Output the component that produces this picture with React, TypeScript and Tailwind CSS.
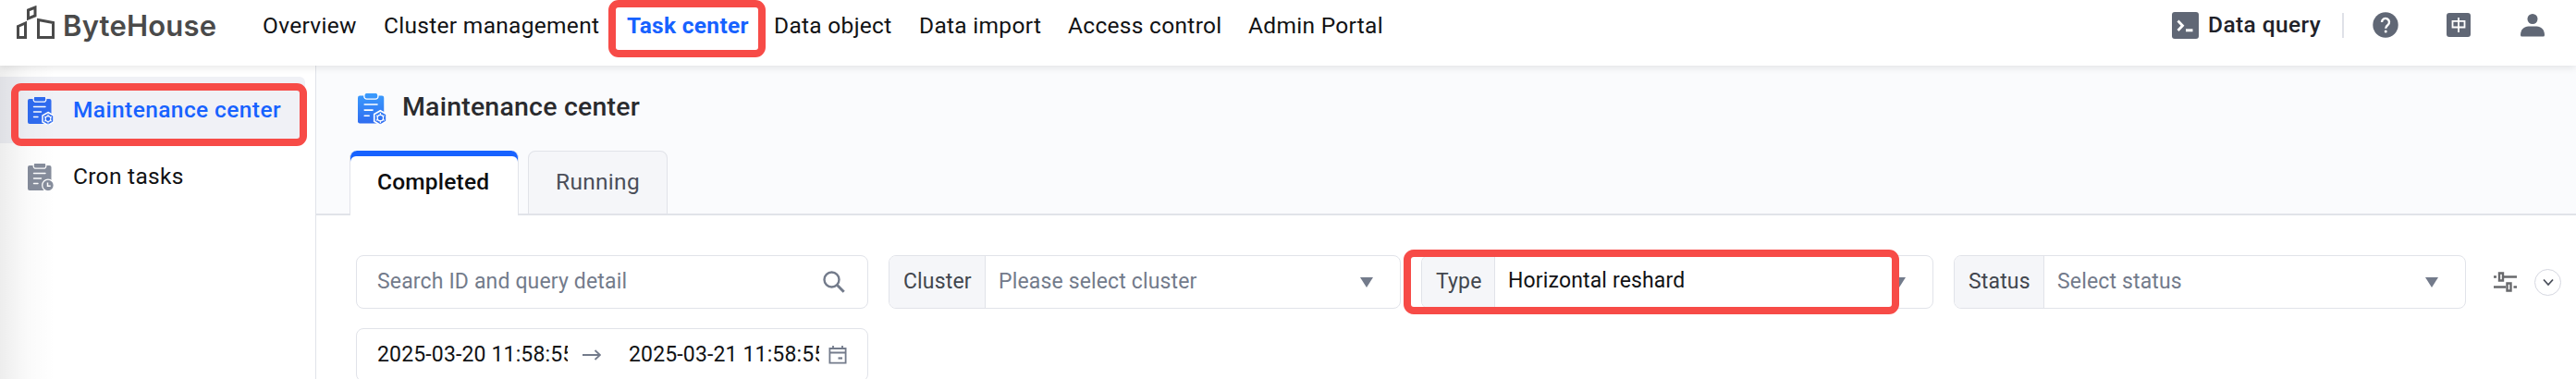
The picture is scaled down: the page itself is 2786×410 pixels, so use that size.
import type { ReactNode } from "react";
import clsx from "clsx";

const navItems = [
  { label: "Overview", width: "w-[131px]" },
  { label: "Cluster management", width: "w-[263px]" },
  { label: "Task center", width: "w-[159px]", active: true },
  { label: "Data object", width: "w-[157px]" },
  { label: "Data import", width: "w-[161px]" },
  { label: "Access control", width: "w-[195px]" },
  { label: "Admin Portal", width: "w-[150px]" },
];

function Logo() {
  return (
    <div className="flex items-start text-[#4a4a4a]">
      <svg className="mt-1.5 h-9 w-[42px]" viewBox="0 0 42 36" fill="none" stroke="currentColor" strokeWidth="3">
        <path d="M1.5 22.5 9.5 19V34.5H1.5z" />
        <path d="M12.5 5 20 2V11L12.5 14z" />
        <path d="M23.5 15.5 39.5 18.5V34.5H23.5z" />
      </svg>
      <span className="ml-2 mt-[9px] text-[31px] leading-[38px] font-semibold tracking-[0.2px] font-['Inter',sans-serif]">ByteHouse</span>
    </div>
  );
}

function ClipboardIcon({ badge, color, className }: { badge: "gear" | "clock"; color: string; className: string }) {
  return (
    <svg className={className} viewBox="0 0 28 30" fill="none">
      <defs>
        <linearGradient id="clip" gradientUnits="userSpaceOnUse" x1="0" y1="0" x2="0" y2="30">
          <stop offset="0" stopColor="#3a9bfd" />
          <stop offset="1" stopColor="#2f6bf0" />
        </linearGradient>
      </defs>
      <rect y="2" width="25.5" height="27" rx="2" fill={color} />
      <rect x="6.2" y="-1" width="13.600" height="6.200" rx="2.500" fill={color} stroke="#fff" strokeWidth="1.200" />
      <path d="M6.500 10.500H19M6.500 16H14.500M6.500 21.500H11" stroke="#fff" strokeWidth="1.400" strokeLinecap="round" />
      {badge === "gear" ? (
        <>
          <path d="M22 16.500 28 20V27L22 30.500 16 27V20z" fill={color} stroke="#fff" strokeWidth="1.500" />
          <circle cx="22" cy="23.600" r="2.900" stroke="#fff" strokeWidth="1.200" />
          <path d="M22 18.500v2M22 26.700v2M18 21.200l1.500.9M24.500 25.200l1.600.9M26 21.200l-1.500.9M19.500 25.200l-1.600.9" stroke="#fff" strokeWidth="1" />
        </>
      ) : (
        <>
          <circle cx="22" cy="23.500" r="6.300" fill={color} stroke="#fff" strokeWidth="1.300" />
          <path d="M21.500 20.500V24.200H24.700" stroke="#fff" strokeWidth="1.500" />
        </>
      )}
    </svg>
  );
}

function QueryIcon() {
  return (
    <svg className="h-[29px] w-[29px]" viewBox="0 0 29 29" fill="none">
      <rect width="29" height="29" rx="3" fill="#606775" />
      <path d="M6.500 9.500 11.500 14.700 6.500 20" stroke="#fff" strokeWidth="2.800" />
      <path d="M15 19.800h7.500" stroke="#fff" strokeWidth="3" />
    </svg>
  );
}

function HelpIcon() {
  return (
    <svg className="h-7 w-7" viewBox="0 0 28 28" fill="none">
      <circle cx="14" cy="14" r="13.700" fill="#606775" />
      <path d="M10 11a4 4 0 1 1 6.300 3.200C14.800 15.300 14.200 15.900 14.200 17.800" stroke="#fff" strokeWidth="2.400" />
      <circle cx="14.200" cy="21" r="1.500" fill="#fff" />
    </svg>
  );
}

function LanguageIcon() {
  return (
    <svg className="h-[26px] w-[26px]" viewBox="0 0 26 26" fill="none">
      <rect width="26" height="26" rx="3" fill="#606775" />
      <path d="M6.500 8.800H19.500V15.500H6.500zM13 5V21" stroke="#fff" strokeWidth="1.800" />
    </svg>
  );
}

function UserIcon() {
  return (
    <svg className="h-[26px] w-[26px]" viewBox="0 0 26 26" fill="#606775">
      <circle cx="13" cy="6.500" r="5.500" />
      <path d="M0 24C0 18 4 14.500 8.500 14.500H17.500C22 14.500 26 18 26 24a1.500 1.500 0 0 1-1.500 1.500h-23A1.500 1.500 0 0 1 0 24z" />
    </svg>
  );
}

function SearchIcon() {
  return (
    <svg className="h-6 w-6" viewBox="0 0 24 24" fill="none" stroke="#737b8b">
      <circle cx="9.500" cy="9.500" r="8" strokeWidth="2.400" />
      <path d="M15.500 15.500 22.700 22.700" strokeWidth="3" />
    </svg>
  );
}

function CalendarIcon() {
  return (
    <svg className="h-5 w-5" viewBox="0 0 20 20" fill="none" stroke="#737b8b" strokeWidth="1.800">
      <path d="M1.400 3H18.600V18.600H1.400zM1.400 7.500H18.600M5 0V3M15 0V3" />
      <path d="M10.500 13.500H15" strokeWidth="2.200" />
    </svg>
  );
}

function SlidersIcon() {
  return (
    <svg className="h-[22px] w-[26px]" viewBox="0 0 26 22" fill="none" stroke="#68696c" strokeWidth="2.400">
      <path d="M1 5.500H4M12 5.500H26M1 16.500H14M22.500 16.500H26" />
      <path d="M7 1.500H11V9.500H7zM15.500 12.500H19.500V20.500H15.500z" />
    </svg>
  );
}

/* red frame drawn over a control */
function Highlight({ className }: { className: string }) {
  return <div className={clsx("pointer-events-none absolute z-20 rounded-[11px] border-8 border-[#f74b47]", className)} />;
}

function Header() {
  return (
    <header className="relative z-10 flex h-[71px] shrink-0 bg-white pl-[18px] shadow-[0_2px_8px_rgba(0,0,0,0.1)]">
      <div className="w-[266px]">
        <Logo />
      </div>
      <nav className="flex pt-3 text-[24.5px] leading-8 tracking-[0.3px] text-[#111214]">
        {navItems.map((item) => (
          <a key={item.label} className={clsx("relative shrink-0 whitespace-nowrap", item.width, item.active && "font-bold text-[#1762ff]")}>
            {item.label}
            {item.active && <Highlight className="-left-5 -top-3 h-[62px] w-[170px]" />}
          </a>
        ))}
      </nav>
      <div className="ml-auto flex h-[54px] items-center pr-[34px]">
        <QueryIcon />
        <span className="ml-2.5 w-[122px] text-[24.5px] font-medium tracking-[0.4px] whitespace-nowrap text-[#1f2229]">Data query</span>
        <span className="mr-[31px] ml-[23px] h-[27px] w-0.5 bg-[#dfe1e8]" />
        <HelpIcon />
        <span className="ml-[52px]"><LanguageIcon /></span>
        <span className="ml-[54px]"><UserIcon /></span>
      </div>
    </header>
  );
}

function Sidebar() {
  return (
    <aside className="w-[342px] shrink-0 border-r border-[#e1e3e9] bg-white pt-3 text-[24.5px] tracking-[0.3px] text-[#111214]">
      <div className="relative flex h-[72px] w-[330px] items-start rounded-r-md bg-[#f0f1f6] pl-[30px] font-medium text-[#1762ff]">
        <ClipboardIcon badge="gear" color="#2f6bf0" className="mt-[22px] h-[30px] w-7" />
        <span className="mt-5 ml-[21px] leading-8 tracking-[0.4px]">Maintenance center</span>
        <Highlight className="top-[7px] left-3 h-[68px] w-[320px]" />
      </div>
      <div className="flex h-[72px] items-start pl-[30px]">
        <ClipboardIcon badge="clock" color="#868d9c" className="mt-[22px] h-[30px] w-7" />
        <span className="mt-5 ml-[21px] leading-8">Cron tasks</span>
      </div>
    </aside>
  );
}

function SelectField({ label, labelWidth, children, filled }: { label: string; labelWidth: string; children: ReactNode; filled?: boolean }) {
  return (
    <div className="flex h-[58px] w-[554px] shrink-0 items-center overflow-hidden rounded-lg border border-[#e1e3e9] bg-white">
      <span className={clsx("flex h-full shrink-0 items-center border-r border-[#e1e3e9] bg-[#f5f6f9] pl-[15px] text-[#42464e]", labelWidth)}>{label}</span>
      <span className={clsx("flex-1 pl-[14px]", filled ? "pb-px text-[#111214]" : "text-[#737b8b]")}>{children}</span>
      <svg className="mr-7 h-[11px] w-4" viewBox="0 0 16 11" fill="#737b8b">
        <path d="M1 0H15L8 11z" />
      </svg>
    </div>
  );
}

function Filters() {
  return (
    <div className="pt-[43px] pl-[43px] text-[23px] tracking-[0.15px]">
      <div className="flex items-center gap-[22px]">
        <div className="flex h-[58px] w-[554px] shrink-0 items-center justify-between rounded-lg border border-[#e1e3e9] pr-6 pl-[22px] text-[#737b8b]">
          <span>Search ID and query detail</span>
          <SearchIcon />
        </div>
        <SelectField label="Cluster" labelWidth="w-[104px]">Please select cluster</SelectField>
        <div className="relative shrink-0">
          <SelectField label="Type" labelWidth="w-[79px]" filled>Horizontal reshard</SelectField>
          <Highlight className="-top-1.5 -left-[19px] h-[70px] w-[536px]" />
        </div>
        <SelectField label="Status" labelWidth="w-[97px]">Select status</SelectField>
        <div className="ml-[7px] flex shrink-0 items-center gap-[19px]">
          <SlidersIcon />
          <span className="flex h-[29px] w-[29px] items-center justify-center rounded-full border border-[#d5d7e0]">
            <svg className="h-3 w-3" viewBox="0 0 12 12" fill="none" stroke="#4a4f5a" strokeWidth="1.800">
              <path d="M1 3.500 6 9 11 3.500" />
            </svg>
          </span>
        </div>
      </div>
      <div className="mt-[21px] flex h-[58px] w-[554px] items-center rounded-lg border border-[#e1e3e9] pl-[22px] text-[#111214]">
        <span className="w-[206px] overflow-hidden whitespace-nowrap">2025-03-20 11:58:55</span>
        <svg className="mr-[30px] ml-4 h-3 w-5" viewBox="0 0 20 12" fill="none" stroke="#737b8b" strokeWidth="1.800">
          <path d="M0 6H19M13.500 1 19 6 13.500 11" />
        </svg>
        <span className="w-[206px] overflow-hidden whitespace-nowrap">2025-03-21 11:58:55</span>
        <span className="ml-2.5"><CalendarIcon /></span>
      </div>
    </div>
  );
}

export default function App() {
  return (
    <div className="relative flex h-[410px] w-[2786px] flex-col overflow-hidden bg-white font-['Roboto',sans-serif]">
      <Header />
      <div className="flex min-h-0 flex-1">
        <Sidebar />
        <main className="min-w-0 flex-1">
          <section className="flex h-[162px] flex-col justify-between border-b-2 border-[#e1e3e9] bg-[#fafbfd]">
            <div className="flex items-start pt-[30px] pl-[45px]">
              <ClipboardIcon badge="gear" color="url(#clip)" className="h-[34px] w-[31px]" />
              <h1 className="-mt-[3px] ml-[17px] text-[28.5px] leading-9 font-medium tracking-[0.2px] text-[#2a2b2e]">Maintenance center</h1>
            </div>
            <div className="-mb-0.5 flex gap-2.5 pl-9 text-[24.5px]">
              <div className="h-[70px] w-[183px] overflow-hidden rounded-t-lg border-x border-[#e1e3e9] bg-[#1762ff] pt-1.5">
                <div className="h-full rounded-t-md bg-white pt-[5px] pl-[29px] leading-[46px] font-medium tracking-[0.2px] text-[#0c0d0f]">Completed</div>
              </div>
              <div className="h-[70px] w-[151px] rounded-t-lg border border-b-2 border-[#e1e3e9] bg-[#f5f6f9] pt-2.5 pl-[29px] leading-[46px] tracking-[0.3px] text-[#4a4e59]">Running</div>
            </div>
          </section>
          <Filters />
        </main>
      </div>
      <div className="pointer-events-none absolute inset-y-0 left-0 w-[60px] bg-linear-to-r from-black/7 via-black/2 to-transparent" />
    </div>
  );
}
